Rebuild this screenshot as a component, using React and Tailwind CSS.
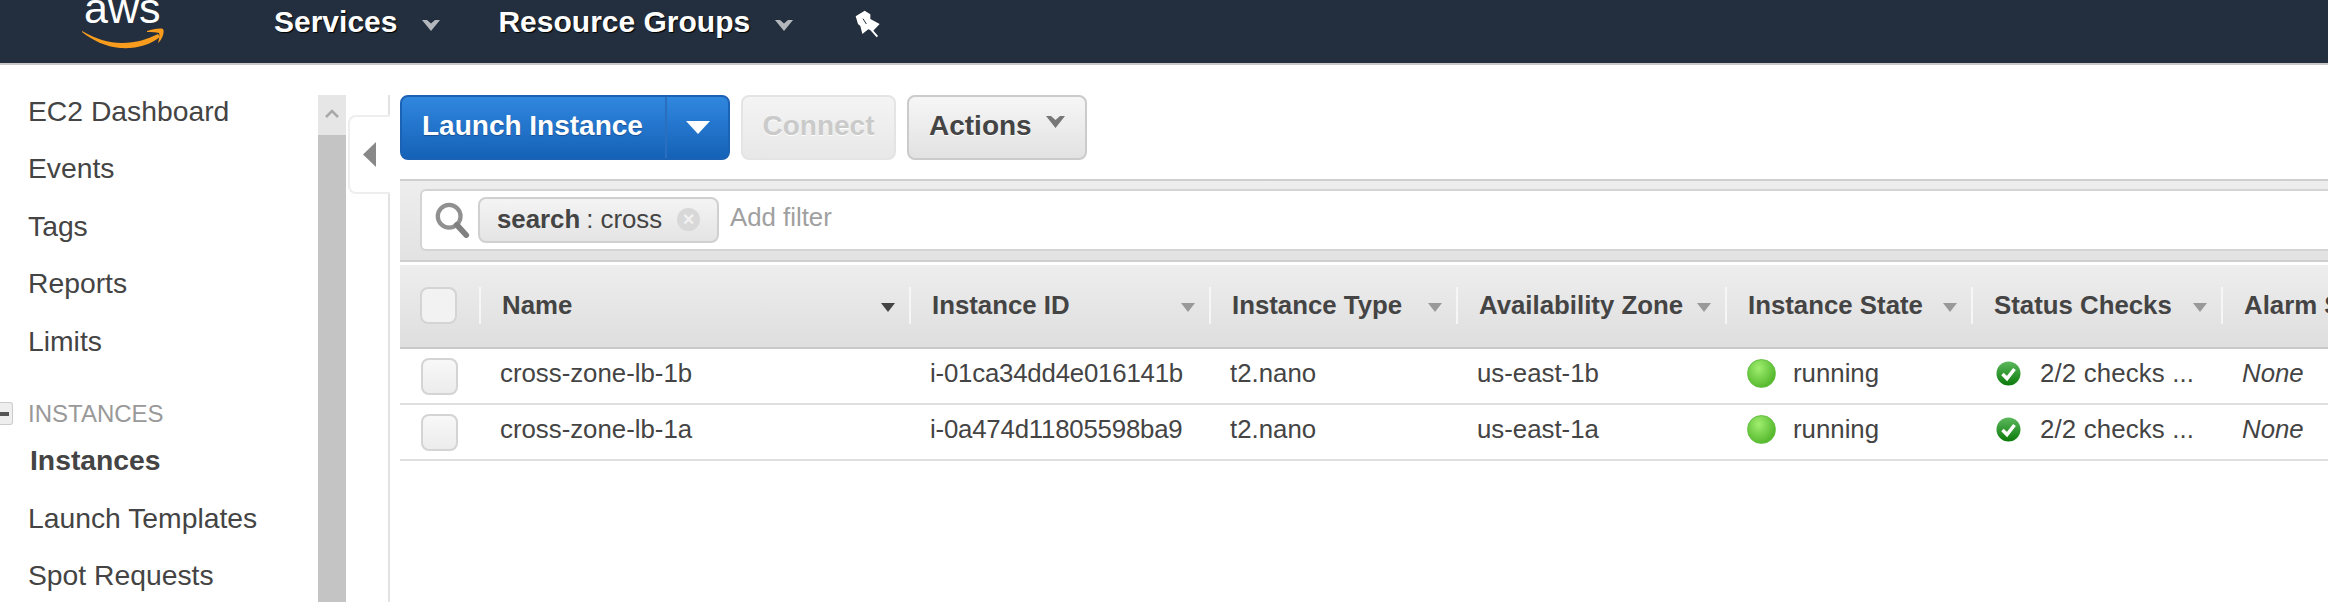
const GRID = "grid grid-cols-[79px_430px_300px_247px_269px_246px_250px_107px]";

const navTop = ["EC2 Dashboard", "Events", "Tags", "Reports", "Limits"];
const columns = ["Name", "Instance ID", "Instance Type", "Availability Zone", "Instance State", "Status Checks", "Alarm Status"];
const rows = [
  { name: "cross-zone-lb-1b", id: "i-01ca34dd4e016141b", zone: "us-east-1b" },
  { name: "cross-zone-lb-1a", id: "i-0a474d11805598ba9", zone: "us-east-1a" },
];

function AwsLogo() {
  return (
    <div className="relative w-[84px] h-[43px] ml-[82px]">
      <div className="absolute left-[2px] top-[-17px] text-[43px] leading-[50px] text-white [text-shadow:none] font-normal">aws</div>
      <svg className="absolute left-0 top-[28px]" width="84" height="22" viewBox="0 0 84 22">
        <path d="M0 3 C14 11 26 15 40 15 C54 15 66 11 76 6 L78 9 C68 17 54 21 38 20 C24 19 10 12 0 4 Z" fill="#f79c1d" />
        <path d="M65 3 C71 1 78 0 81 1 C83 4 80 12 76 15 C77 11 78 7 77 5 C74 4 70 4 65 4 Z" fill="#f79c1d" />
      </svg>
    </div>
  );
}

function NavChevron() {
  return (
    <svg width="18" height="11" viewBox="0 0 18 11" className="mt-[8px]">
      <path d="M0 0 L5 0 L9 3.5 L13 0 L18 0 L9 11 Z" fill="#b4b8bd" />
    </svg>
  );
}

function Pin() {
  return (
    <svg width="26" height="28" viewBox="46 28 78 84" className="mt-[4px]">
      <path d="M48 47 L75 30 L92 41 L92 55 L120 70 L100 91 L86 86 L68 100 L62 76 L55 70 Z" fill="#fff" />
      <path d="M92 84 L113 108" stroke="#fff" strokeWidth="6" />
      <path d="M70 54 L80 70" stroke="#232f3e" strokeWidth="3" />
    </svg>
  );
}

function Header() {
  return (
    <header className="flex items-center h-[65px] pb-[20px] bg-[#232f3e] border-b-2 border-[#c8c8c8] text-white font-bold text-[30px] [text-shadow:1px_1px_1px_#000] whitespace-nowrap">
      <AwsLogo />
      <span className="ml-[108px]">Services</span>
      <div className="ml-[25px]"><NavChevron /></div>
      <span className="ml-[58px]">Resource Groups</span>
      <div className="ml-[25px]"><NavChevron /></div>
      <div className="ml-[62px]"><Pin /></div>
    </header>
  );
}

function Sidebar() {
  return (
    <nav className="w-[318px] shrink-0 pt-[17px] text-[28.3px] text-[#444] whitespace-nowrap">
      {navTop.map((label) => (
        <div key={label} className="h-[57.5px] pl-[28px] flex items-center">{label}</div>
      ))}
      <div className="h-[36px] mt-[26px] flex items-center gap-[15px] text-[#999] text-[24px]">
        <div className="w-[13px] h-[23px] bg-[#eee] border border-l-0 border-[#ccc] rounded-r-[3px] flex items-center">
          <div className="w-[9px] h-[4px] bg-[#555]" />
        </div>
        INSTANCES
      </div>
      <div className="h-[57.5px] pl-[30px] flex items-center font-bold">Instances</div>
      <div className="h-[57.5px] pl-[28px] flex items-center">Launch Templates</div>
      <div className="h-[57.5px] pl-[28px] flex items-center">Spot Requests</div>
    </nav>
  );
}

function Scrollbar() {
  return (
    <div className="w-[28px] shrink-0 mt-[30px] flex flex-col bg-[#c4c4c4]">
      <div className="h-[40px] bg-[#e6e6e6] flex justify-center pt-[14px]">
        <svg width="14" height="9" viewBox="0 0 14 9">
          <path d="M1 8 L7 2 L13 8" fill="none" stroke="#a8a8a8" strokeWidth="2.5" />
        </svg>
      </div>
    </div>
  );
}

function Collapser() {
  return (
    <div className="w-[44px] shrink-0 mt-[30px] flex flex-col items-end">
      <div className="w-[2px] h-[20px] bg-[#e2e2e2]" />
      <div className="w-[42px] h-[79px] border-2 border-r-0 border-[#eee] rounded-l-[8px] flex items-center pl-[13px]">
        <svg width="13" height="25" viewBox="0 0 13 25">
          <path d="M13 0 L13 25 L0 12.5 Z" fill="#888" />
        </svg>
      </div>
      <div className="w-[2px] flex-1 bg-[#e2e2e2]" />
    </div>
  );
}

function Caret({ color, w = 14, h = 9 }) {
  return (
    <svg width={w} height={h} viewBox="0 0 14 9" preserveAspectRatio="none">
      <path d="M0 0 H14 L7 9 Z" fill={color} />
    </svg>
  );
}

function Toolbar() {
  return (
    <div className="flex h-[65px] gap-[11px] font-bold text-[28px]">
      <div className="w-[330px] flex border-2 border-[#1b62b5] rounded-[8px] bg-linear-to-b from-[#3087de] to-[#1562b8] text-white">
        <div className="w-[263px] flex items-center pl-[20px] pb-[3px] [text-shadow:0_1px_1px_#1b4f8f]">Launch Instance</div>
        <div className="flex-1 flex items-center justify-center border-l-2 border-[#2a6fbf]">
          <Caret color="#fff" w={24} h={13} />
        </div>
      </div>
      <div className="w-[155px] pb-[3px] flex items-center justify-center border-2 border-[#e4e4e4] rounded-[8px] bg-linear-to-b from-[#f4f4f4] to-[#e8e8e8] text-[#cacaca] [text-shadow:0_1px_0_#fff]">
        Connect
      </div>
      <div className="w-[180px] pb-[3px] flex items-center pl-[20px] gap-[14px] border-2 border-[#cbcbcb] rounded-[8px] bg-linear-to-b from-[#f6f6f6] to-[#e2e2e2] text-[#444] [text-shadow:0_1px_0_#fff]">
        Actions
        <svg width="19" height="12" viewBox="0 0 19 12" className="mt-[-8px]">
          <path d="M0 0 L5 0 L9.5 4 L14 0 L19 0 L9.5 12 Z" fill="#777" />
        </svg>
      </div>
    </div>
  );
}

function FilterBar() {
  return (
    <div className="mt-[19px] h-[83px] bg-linear-to-b from-[#eeeeee] to-[#e2e2e2] border-y-2 border-[#cfcfcf] pt-[8px] pl-[20px]">
      <div className="h-[62px] flex items-center bg-white border-2 border-r-0 border-[#d4d4d4] rounded-l-[6px] pl-[12px] text-[25.8px]">
        <svg width="36" height="36" viewBox="0 0 36 38" className="shrink-0">
          <circle cx="15" cy="15" r="12" fill="none" stroke="#909090" strokeWidth="4.5" />
          <path d="M23 24 L33 35" stroke="#808080" strokeWidth="6" strokeLinecap="round" />
        </svg>
        <div className="ml-[8px] w-[241px] h-[46px] flex items-center pl-[17px] pb-[2px] bg-linear-to-b from-[#f4f4f4] to-[#e4e4e4] border-2 border-[#d0d0d0] rounded-[8px] text-[#444] whitespace-nowrap">
          <b>search</b>
          <span className="ml-[6px]">: cross</span>
          <span className="ml-[15px] w-[23px] h-[23px] rounded-full bg-[#d8d8d8] text-[#f2f2f2] text-[20px] font-bold leading-[22px] text-center">×</span>
        </div>
        <span className="ml-[11px] text-[#a0a0a0] mt-[-5px]">Add filter</span>
      </div>
    </div>
  );
}

function TableHead() {
  return (
    <div className={`${GRID} mt-[3px] h-[84px] bg-linear-to-b from-[#eeeeee] to-[#dedede] border-b-2 border-[#c8c8c8] text-[25.8px] font-bold text-[#444] pt-[22px] whitespace-nowrap`}>
      <div className="pl-[20px]">
        <div className="w-[37px] h-[37px] border-2 border-[#d4d4d4] rounded-[8px] bg-[#f2f2f2]" />
      </div>
      {columns.map((col, i) => (
        <div key={col} className="h-[37px] border-l-2 border-[#f6f6f6] pl-[21px] flex items-center justify-between overflow-hidden">
          <span>{col}</span>
          {i < columns.length - 1 && (
            <span className="mr-[14px] mt-[3px]">
              <Caret color={i === 0 ? "#444" : "#999"} />
            </span>
          )}
        </div>
      ))}
    </div>
  );
}

function TableRow({ row }) {
  return (
    <div className={`${GRID} h-[56px] items-center border-b-2 border-[#dfdfdf] text-[25.8px] text-[#444] whitespace-nowrap`}>
      <div className="pl-[21px]">
        <div className="w-[37px] h-[37px] border-2 border-[#d4d4d4] rounded-[8px] bg-linear-to-b from-[#f8f8f8] to-[#ececec]" />
      </div>
      <div className="pl-[21px] pb-[6px]">{row.name}</div>
      <div className="pl-[21px] pb-[6px] tracking-[-0.2px]">{row.id}</div>
      <div className="pl-[21px] pb-[6px]">t2.nano</div>
      <div className="pl-[21px] pb-[6px]">{row.zone}</div>
      <div className="pl-[22px] pb-[6px] flex items-center">
        <div className="w-[29px] h-[29px] rounded-full bg-radial-[at_40%_30%] from-[#a0ee70] to-[#3ca616] border border-[#62bf3e]" />
        <span className="ml-[17px]">running</span>
      </div>
      <div className="pl-[25px] pb-[6px] flex items-center">
        <svg width="25" height="25" viewBox="0 0 25 25">
          <defs>
            <linearGradient id="check-g" x1="0" y1="0" x2="0" y2="1">
              <stop offset="0%" stopColor="#5cb85c" />
              <stop offset="100%" stopColor="#0b7a0b" />
            </linearGradient>
          </defs>
          <circle cx="12.5" cy="12.5" r="12" fill="url(#check-g)" />
          <path d="M6.5 13 L11 17.5 L18.5 8" fill="none" stroke="#fff" strokeWidth="3.5" />
        </svg>
        <span className="ml-[19px] tracking-[0.15px]">2/2 checks ...</span>
      </div>
      <div className="pl-[21px] pb-[6px] italic">None</div>
    </div>
  );
}

export default function App() {
  return (
    <div className="h-[602px] w-[2328px] overflow-hidden bg-white font-['Liberation_Sans',Arial,sans-serif]">
      <Header />
      <div className="flex h-[537px]">
        <Sidebar />
        <Scrollbar />
        <Collapser />
        <main className="flex-1 min-w-0 ml-[10px] pt-[30px] overflow-hidden">
          <Toolbar />
          <FilterBar />
          <TableHead />
          {rows.map((row) => (
            <TableRow key={row.name} row={row} />
          ))}
        </main>
      </div>
    </div>
  );
}
